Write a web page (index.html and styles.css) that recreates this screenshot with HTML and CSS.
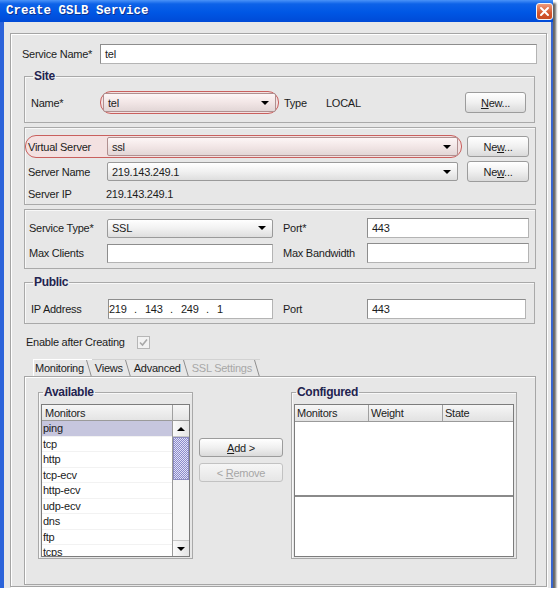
FILE: index.html
```html
<!DOCTYPE html>
<html>
<head>
<meta charset="utf-8">
<title>Create GSLB Service</title>
<link rel="stylesheet" href="styles.css">
</head>
<body>
<div class="window">
  <div class="titlebar">
    <span class="title">Create GSLB Service</span>
    <span class="close"><svg width="11" height="11" viewBox="0 0 11 11"><path d="M2 2 L9 9 M9 2 L2 9" stroke="#fff" stroke-width="2" stroke-linecap="round"/></svg></span>
  </div>
  <div class="client">
    <div class="panel">
      <div class="row name-row">
        <span class="lbl lbl-service">Service Name*</span>
        <div class="field field-service">tel</div>
      </div>

      <fieldset class="group site">
        <legend>Site</legend>
        <div class="row">
          <span class="lbl w69">Name*</span>
          <span class="oval oval-site"><span class="select sel-site">tel<i class="arrow"></i></span></span>
          <span class="lbl type-lbl">Type</span>
          <span class="lbl type-val">LOCAL</span>
          <span class="btn btn-site"><span><u>N</u>ew...</span></span>
        </div>
      </fieldset>

      <div class="box vs">
        <div class="row">
          <span class="oval oval-vs">
            <span class="lbl w79">Virtual Server</span>
            <span class="select sel-wide">ssl<i class="arrow"></i></span>
          </span>
          <span class="btn btn-vs1"><span>Ne<u>w</u>...</span></span>
        </div>
        <div class="row row2">
          <span class="lbl w82 pl3">Server Name</span>
          <span class="select sel-wide">219.143.249.1<i class="arrow"></i></span>
          <span class="btn btn-vs2"><span>Ne<u>w</u>...</span></span>
        </div>
        <div class="row row3">
          <span class="lbl w81 pl3">Server IP</span>
          <span class="lbl">219.143.249.1</span>
        </div>
      </div>

      <div class="box svc">
        <div class="row">
          <span class="lbl w78">Service Type*</span>
          <span class="select sel-type">SSL<i class="arrow"></i></span>
          <span class="lbl w84 ml10">Port*</span>
          <div class="field w162">443</div>
        </div>
        <div class="row row-b">
          <span class="lbl w78">Max Clients</span>
          <div class="field w166"></div>
          <span class="lbl w84 ml10">Max Bandwidth</span>
          <div class="field w162"></div>
        </div>
      </div>

      <fieldset class="group public">
        <legend>Public</legend>
        <div class="row">
          <span class="lbl w77">IP Address</span>
          <div class="field ip w165">
            <span class="oct">219</span><span class="dot">.</span><span class="oct">143</span><span class="dot">.</span><span class="oct">249</span><span class="dot">.</span><span class="oct">1</span>
          </div>
          <span class="lbl w84 ml10">Port</span>
          <div class="field w159">443</div>
        </div>
      </fieldset>

      <div class="row enable-row">
        <span class="lbl enable-lbl">Enable after Creating</span>
        <span class="check"><svg width="9" height="9" viewBox="0 0 9 9"><path d="M1 4.5 L3.5 7 L8 1.5" stroke="#a8a8a8" stroke-width="1.6" fill="none"/></svg></span>
      </div>

      <div class="tabs">
        <span class="tab active">Monitoring<svg class="slant" width="6" height="17" viewBox="0 0 6 17"><path d="M0.5 0 L5.5 17" stroke="#8e8e8e" fill="none"/></svg></span>
        <span class="tab">Views<svg class="slant" width="6" height="17" viewBox="0 0 6 17"><path d="M0.5 0 L5.5 17" stroke="#8e8e8e" fill="none"/></svg></span>
        <span class="tab">Advanced<svg class="slant" width="6" height="17" viewBox="0 0 6 17"><path d="M0.5 0 L5.5 17" stroke="#8e8e8e" fill="none"/></svg></span>
        <span class="tab disabled">SSL Settings<svg class="slant" width="6" height="17" viewBox="0 0 6 17"><path d="M0.5 0 L5.5 17" stroke="#8e8e8e" fill="none"/></svg></span>
      </div>

      <div class="tabpanel">
        <fieldset class="group avail">
          <legend>Available</legend>
          <div class="list">
            <div class="hcell">Monitors</div>
            <div class="hcell corner"></div>
            <div class="rows">
              <div class="item sel">ping</div>
              <div class="item">tcp</div>
              <div class="item">http</div>
              <div class="item">tcp-ecv</div>
              <div class="item">http-ecv</div>
              <div class="item">udp-ecv</div>
              <div class="item">dns</div>
              <div class="item">ftp</div>
              <div class="item">tcps</div>
            </div>
            <div class="vscroll">
              <span class="sbtn"><i class="up"></i></span>
              <span class="thumb"></span>
              <span class="track"></span>
              <span class="sbtn"><i class="down"></i></span>
            </div>
          </div>
        </fieldset>

        <div class="movebtns">
          <span class="btn btn-move"><span><u>A</u>dd &gt;</span></span>
          <span class="btn btn-move disabled"><span>&lt; <u>R</u>emove</span></span>
        </div>

        <fieldset class="group conf">
          <legend>Configured</legend>
          <div class="table">
            <div class="thead">
              <span class="th">Monitors</span>
              <span class="th">Weight</span>
              <span class="th last">State</span>
            </div>
            <div class="tbody"></div>
            <div class="tsplit"></div>
            <div class="tfoot"></div>
          </div>
        </fieldset>
      </div>
    </div>
  </div>
</div>
</body>
</html>
```

FILE: styles.css
```css
html, body {
  margin: 0;
  padding: 0;
  background: #ffffff;
}
body {
  font-family: "Liberation Sans", Arial, sans-serif;
  font-size: 11px;
  letter-spacing: -0.25px;
  color: #1c1c1c;
}
* { box-sizing: border-box; }

.window {
  width: 553px;
  height: 588px;
  display: flex;
  flex-direction: column;
  background: #e7e7e7;
  box-shadow: 3px 3px 2px rgba(0, 0, 0, 0.6);
}

.titlebar {
  height: 22px;
  flex: none;
  display: flex;
  align-items: center;
  padding-left: 6px;
  background: linear-gradient(#4a93f8 0%, #0d62e8 18%, #0057e5 55%, #004ad6 100%);
}
.title {
  font-family: "Liberation Mono", monospace;
  font-weight: bold;
  font-size: 12.5px;
  letter-spacing: 0;
  color: #ffffff;
  text-shadow: 1px 1px 0 #0b2f8e;
}
.close {
  margin-left: auto;
  width: 17px;
  height: 17px;
  border: 1px solid #f4f4f4;
  border-radius: 3px;
  background: linear-gradient(#ee9a7c, #d4552c 60%, #c84a22);
  display: flex;
  align-items: center;
  justify-content: center;
}

.client {
  flex: 1;
  display: flex;
  border-left: 4px solid #2b63da;
  border-right: 2px solid #3866cf;
  padding: 11px 4px 1px 6px;
}

.panel {
  flex: 1;
  display: flex;
  flex-direction: column;
  border: 1px solid #a4a4a4;
  box-shadow: inset 1px 1px 0 #ffffff, 1px 1px 0 #ffffff;
  padding: 10px 10px 1px 13px;
}

.row {
  display: flex;
  align-items: center;
}
.lbl {
  white-space: nowrap;
  flex: none;
}
.w69 { width: 69px; }
.w77 { width: 77px; }
.w78 { width: 78px; }
.w79 { width: 79px; }
.w81 { width: 81px; }
.w82 { width: 82px; }
.w84 { width: 84px; }
.pl3 { padding-left: 3px; }
.ml10 { margin-left: 10px; }

.field {
  height: 20px;
  flex: none;
  display: flex;
  align-items: center;
  background: #ffffff;
  border: 1px solid #8d8d8d;
  border-right-color: #b4b4b4;
  border-bottom-color: #b4b4b4;
  padding-left: 4px;
}
.w159 { width: 159px; }
.w162 { width: 162px; }
.w165 { width: 165px; }
.w166 { width: 166px; height: 19px; }

.select {
  height: 19px;
  flex: none;
  display: flex;
  align-items: center;
  padding-left: 4px;
  border: 1px solid #9a9a9a;
  border-radius: 2px;
  background: linear-gradient(#ffffff, #f1f1f1 50%, #dedede);
}
.arrow {
  margin-left: auto;
  margin-right: 6px;
  width: 0;
  height: 0;
  border-left: 4px solid transparent;
  border-right: 4px solid transparent;
  border-top: 4px solid #000000;
}

.btn {
  flex: none;
  height: 21px;
  display: flex;
  align-items: center;
  justify-content: center;
  border: 1px solid #9c9c9c;
  border-radius: 3px;
  background: linear-gradient(#ffffff, #f0f0f0 50%, #dadada);
  color: #1c1c1c;
  white-space: pre;
}
.btn.disabled {
  color: #a6a6a6;
  border-color: #c2c2c2;
  background: linear-gradient(#f6f6f6, #e6e6e6);
}

.oval {
  display: flex;
  align-items: center;
  flex: none;
  border: 1px solid #c9605e;
  border-radius: 11px;
  background: #f3e1e1;
  padding: 1px 2px;
}
.oval .select {
  background: linear-gradient(#fdf6f6, #f2e6e6 50%, #e2d6d6);
  border-color: #b09090;
}

/* Service name */
.name-row { height: 20px; }
.lbl-service { width: 78px; margin-left: -2px; }
.field-service { width: 437px; margin-right: -1px; }

/* group boxes */
fieldset.group {
  margin: 0;
  border: 1px solid #a9a9a9;
  box-shadow: inset 1px 1px 0 #f8f8f8;
  min-width: 0;
}
fieldset.group legend {
  font-weight: bold;
  font-size: 12px;
  letter-spacing: -0.3px;
  line-height: 14px;
  height: 14px;
  color: #23234f;
  padding: 0 1px;
  margin-left: 2px;
}

.site {
  margin-top: 5px !important;
  margin-right: 1px !important;
  padding: 8px 8px 8px 6px;
}
.sel-site { width: 173px; }
.type-lbl { margin-left: 5px; width: 42px; }
.btn-site { margin-left: auto; width: 61px; }

.box {
  border: 1px solid #a9a9a9;
  box-shadow: inset 1px 1px 0 #f8f8f8;
}

.vs {
  margin-top: 4px;
  padding: 7px 6px 3px 0;
}
.oval-vs { padding: 1px 3px 1px 2px; }
.sel-wide { width: 351px; }
.btn-vs1 { margin-left: 5px; width: 62px; }
.btn-vs2 { margin-left: 9px; width: 62px; }
.row2 { margin-top: 3px; height: 21px; }
.row3 { margin-top: 5px; height: 14px; }

.svc {
  margin-top: 4px;
  padding: 8px 6px 5px 4px;
}
.svc .row { height: 20px; }
.sel-type { width: 166px; }
.row-b { margin-top: 5px; }

.public {
  margin-top: 6px !important;
  margin-right: 1px !important;
  padding: 10px 8px 4px 6px;
}
.ip { padding-left: 0; }
.oct { width: 25px; flex: none; }
.dot { width: 11px; flex: none; }

.enable-row {
  margin-top: 11px;
  height: 14px;
  padding-left: 2px;
}
.enable-lbl { width: 111px; }
.check {
  width: 13px;
  height: 13px;
  border: 1px solid #b6b6b6;
  background: #f2f2f2;
  display: flex;
  align-items: center;
  justify-content: center;
}

/* tabs */
.tabs {
  margin-top: 10px;
  height: 17px;
  display: flex;
  padding-left: 9px;
}
.tab {
  display: flex;
  align-items: center;
  padding-left: 3px;
  border-top: 1px solid #d2d2d2;
  white-space: nowrap;
}
.tab.active {
  border-left: 1px solid #ffffff;
  border-top-color: #ffffff;
  padding-left: 1px;
}
.tab.disabled { color: #a8a8a8; }
.slant { margin-left: 2px; flex: none; }

.tabpanel {
  flex: 1;
  display: flex;
  align-items: flex-start;
  border: 1px solid #a6a6a6;
  box-shadow: inset 1px 1px 0 #ffffff;
  padding: 8px 0 0 13px;
}

.avail {
  width: 155px;
  flex: none;
  padding: 5px 2px 1px 2px;
}
.conf {
  width: 226px;
  flex: none;
  margin-left: 8px !important;
  padding: 5px 2px 1px 2px;
}

.list {
  height: 153px;
  border: 1px solid #7c7c7c;
  background: #ffffff;
  display: grid;
  grid-template-columns: 1fr 16px;
  grid-template-rows: 16px 1fr;
  overflow: hidden;
}
.hcell {
  background: linear-gradient(#f6f6f6, #e4e4e4);
  border-bottom: 1px solid #9a9a9a;
  border-right: 1px solid #a0a0a0;
  padding-left: 3px;
  display: flex;
  align-items: center;
}
.hcell.corner { border-right: none; }
.rows {
  overflow: hidden;
  border-right: 1px solid #9a9a9a;
}
.item {
  height: 15.5px;
  line-height: 15px;
  padding-left: 1px;
  border-bottom: 1px solid #f2f2f2;
}
.item.sel { background: #c6c6de; }

.vscroll {
  display: flex;
  flex-direction: column;
  background: #f4f4f4;
}
.sbtn {
  height: 16px;
  flex: none;
  display: flex;
  align-items: center;
  justify-content: center;
  background: linear-gradient(90deg, #fafafa, #e4e4e4);
  border-bottom: 1px solid #c8c8c8;
}
.sbtn:last-child { border-top: 1px solid #c8c8c8; border-bottom: none; }
.up, .down {
  width: 0;
  height: 0;
  border-left: 4px solid transparent;
  border-right: 4px solid transparent;
}
.up { border-bottom: 4px solid #000; }
.down { border-top: 4px solid #000; }
.thumb {
  height: 43px;
  flex: none;
  border: 1px solid #8c8cc0;
  background: repeating-conic-gradient(#8a8acb 0 25%, #e2e2f6 0 50%) 0 0 / 2px 2px;
}
.track { flex: 1; }

.movebtns {
  width: 84px;
  flex: none;
  margin-left: 6px;
  margin-top: 53px;
  display: flex;
  flex-direction: column;
  gap: 6px;
}
.btn-move { height: 19px; width: 84px; }

.table {
  height: 153px;
  border: 1px solid #7c7c7c;
  background: #ffffff;
  display: flex;
  flex-direction: column;
}
.thead {
  height: 17px;
  flex: none;
  display: grid;
  grid-template-columns: 74px 74px 1fr;
  background: linear-gradient(#f6f6f6, #e2e2e2);
  border-bottom: 1px solid #9a9a9a;
}
.th {
  display: flex;
  align-items: center;
  padding-left: 2px;
  border-right: 1px solid #a0a0a0;
}
.th.last { border-right: none; }
.tbody { height: 73px; flex: none; }
.tsplit {
  height: 2px;
  flex: none;
  background: #8a8a8a;
}
.tfoot { flex: 1; }
```
